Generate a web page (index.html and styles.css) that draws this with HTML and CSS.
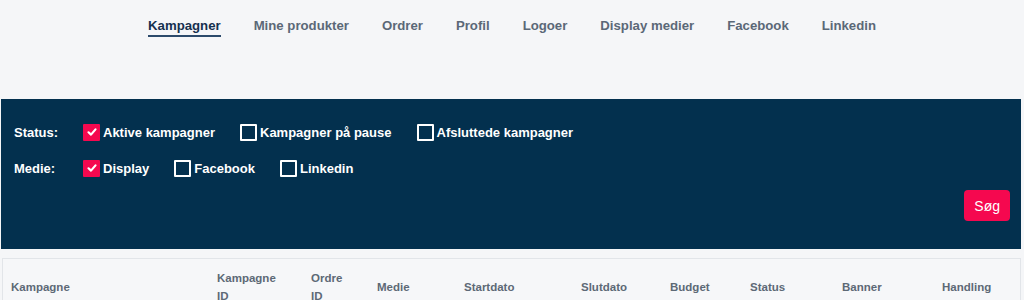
FILE: index.html
```html
<!DOCTYPE html>
<html>
<head>
    <title>Kampagner</title>
    <link rel="stylesheet" href="styles.css">
</head>
<body>
    <div class="header">
        <nav class="nav">
            <a class="nav-item active" href="#">Kampagner</a>
            <a class="nav-item" href="#">Mine produkter</a>
            <a class="nav-item" href="#">Ordrer</a>
            <a class="nav-item" href="#">Profil</a>
            <a class="nav-item" href="#">Logoer</a>
            <a class="nav-item" href="#">Display medier</a>
            <a class="nav-item" href="#">Facebook</a>
            <a class="nav-item" href="#">Linkedin</a>
        </nav>
    </div>

    <div class="filters">
        <div class="filter-row">
            <span class="filter-label">Status:</span>
            <label class="check checked"><span class="box"><svg viewBox="0 0 12 12"><path d="M2.5 6.3 L5 8.6 L9.5 3.4" /></svg></span>Aktive kampagner</label>
            <label class="check"><span class="box"></span>Kampagner på pause</label>
            <label class="check"><span class="box"></span>Afsluttede kampagner</label>
        </div>
        <div class="filter-row">
            <span class="filter-label">Medie:</span>
            <label class="check checked"><span class="box"><svg viewBox="0 0 12 12"><path d="M2.5 6.3 L5 8.6 L9.5 3.4" /></svg></span>Display</label>
            <label class="check"><span class="box"></span>Facebook</label>
            <label class="check"><span class="box"></span>Linkedin</label>
        </div>
        <div class="filter-actions">
            <button class="search-btn">Søg</button>
        </div>
    </div>

    <div class="table-box">
        <table class="campaigns">
            <thead>
                <tr>
                    <th class="col-name">Kampagne</th>
                    <th class="col-cid">Kampagne<br>ID</th>
                    <th class="col-oid">Ordre<br>ID</th>
                    <th class="col-media">Medie</th>
                    <th class="col-start">Startdato</th>
                    <th class="col-end">Slutdato</th>
                    <th class="col-budget">Budget</th>
                    <th class="col-status">Status</th>
                    <th class="col-banner">Banner</th>
                    <th>Handling</th>
                </tr>
            </thead>
        </table>
    </div>
</body>
</html>
```

FILE: styles.css
```css
body {
    font-family: "Liberation Sans", Arial, sans-serif;
    margin: 0;
    background-color: #f5f6f8;
}
.header {
    height: 99px;
}
.nav {
    display: flex;
    justify-content: center;
    gap: 33px;
    padding-top: 18px;
}
.nav-item {
    font-size: 13.2px;
    font-weight: bold;
    line-height: 16px;
    color: #5b6877;
    text-decoration: none;
    padding-bottom: 1px;
}
.nav-item.active {
    color: #15304f;
    border-bottom: 2px solid #2c4a6b;
}
.filters {
    background: #03304e;
    height: 150px;
    box-sizing: border-box;
    margin: 0 3px 0 1px;
    padding: 24px 11px 0 13px;
}
.filter-row {
    display: flex;
    align-items: center;
    height: 18px;
    margin-bottom: 18px;
    color: white;
    font-size: 13px;
    font-weight: bold;
}
.filter-label {
    width: 69px;
}
.check {
    display: flex;
    align-items: center;
    margin-right: 25px;
}
.check .box {
    width: 17px;
    height: 17px;
    box-sizing: border-box;
    border: 2px solid white;
    border-radius: 1px;
    margin-right: 3px;
    display: flex;
    align-items: center;
    justify-content: center;
}
.check.checked .box {
    background: #f5084f;
    border-color: #f5084f;
}
.check svg {
    width: 12px;
    height: 12px;
    fill: none;
    stroke: white;
    stroke-width: 2.2;
    stroke-linecap: round;
    stroke-linejoin: round;
}
.filter-actions {
    display: flex;
    justify-content: flex-end;
    margin-top: -5px;
}
.search-btn {
    height: 31px;
    padding: 0 10px;
    background: #f5084f;
    color: white;
    border: none;
    border-radius: 4px;
    font-family: "Liberation Sans", Arial, sans-serif;
    font-size: 14px;
}
.table-box {
    margin: 9px 3px 0 2px;
    border: 1px solid #e2e5e9;
    background: #f6f7f9;
}
.campaigns {
    width: 100%;
    border-collapse: collapse;
}
.campaigns th {
    text-align: left;
    vertical-align: middle;
    padding: 10px 8px;
    font-size: 11.5px;
    line-height: 18px;
    color: #5d6976;
}
.col-name { width: 190px; }
.col-cid { width: 78px; }
.col-oid { width: 50px; }
.col-media { width: 71px; }
.col-start { width: 101px; }
.col-end { width: 73px; }
.col-budget { width: 64px; }
.col-status { width: 76px; }
.col-banner { width: 84px; }
```
